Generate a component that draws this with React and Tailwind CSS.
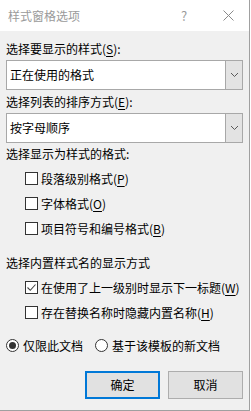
import React, { useState } from 'react';

const font = { fontFamily: '"Microsoft YaHei UI", "Noto Sans CJK SC", "Liberation Sans", sans-serif' };

// access-key letter, underlined like a Windows dialog
const Key = ({ children }) => <span className="underline underline-offset-[2px]">{children}</span>;

const Chevron = () => (
  <svg width="9" height="6" viewBox="0 0 9 6" fill="none">
    <path d="M1 1l3.5 3.5L8 1" stroke="#5a5a5a" strokeWidth="1" />
  </svg>
);

const Select = ({ value }) => (
  <div className="flex h-[30px] border border-[#a8a8a8] bg-white">
    <div className="flex-1 flex items-center pl-[3px] text-[12px] text-black">{value}</div>
    <div className="w-[17px] flex items-center justify-center bg-[#e3e3e3] border-l border-[#a8a8a8]">
      <Chevron />
    </div>
  </div>
);

const Checkbox = ({ checked, label, indent = true }) => (
  <div className={`flex items-center h-[25px] ${indent ? 'pl-[19px]' : ''}`}>
    <div className="w-[13px] h-[13px] border border-[#333] bg-white flex items-center justify-center">
      {checked && (
        <svg width="11" height="11" viewBox="0 0 11 11" fill="none">
          <path d="M1.5 5.5l2.8 2.8L9.5 2.5" stroke="#444" strokeWidth="1.1" />
        </svg>
      )}
    </div>
    <span className="ml-[3px] text-[12px] text-black leading-[16px]">{label}</span>
  </div>
);

const Radio = ({ checked, label, onClick }) => (
  <div className="flex items-center cursor-default" onClick={onClick}>
    <div className="w-[13px] h-[13px] rounded-full border border-[#333] bg-white flex items-center justify-center">
      {checked && <div className="w-[7px] h-[7px] rounded-full bg-[#333]" />}
    </div>
    <span className="ml-[4px] text-[12px] text-black leading-[16px]">{label}</span>
  </div>
);

export default function App() {
  const [scope, setScope] = useState('doc');

  return (
    <div className="w-[251px] h-[411px] bg-white flex" style={font}>
      <div className="w-[250px] h-[411px] flex flex-col border-r border-b border-[#a0a0a0]">
        {/* Title bar */}
        <div className="h-[31px] bg-white flex items-center pl-[8px] text-[12px] text-[#9a9a9a]">
          <span className="flex-1">样式窗格选项</span>
          <span className="w-[14px] text-center text-[13px] mr-[32px]">?</span>
          <svg className="mr-[15px]" width="11" height="11" viewBox="0 0 11 11" fill="none">
            <path d="M0.5 0.5l10 10M10.5 0.5l-10 10" stroke="#8a8a8a" strokeWidth="1" />
          </svg>
        </div>

        {/* Body */}
        <div className="flex-1 bg-[#f0f0f0] px-[6px] pt-[10px] text-[12px] leading-[16px] text-black">
          <div>选择要显示的样式(<Key>S</Key>):</div>
          <div className="mt-[3px]">
            <Select value="正在使用的格式" />
          </div>

          <div className="mt-[4px]">选择列表的排序方式(<Key>E</Key>):</div>
          <div className="mt-[3px]">
            <Select value="按字母顺序" />
          </div>

          <div className="mt-[3px]">选择显示为样式的格式:</div>
          <div className="mt-[4px]">
            <Checkbox label={<>段落级别格式(<Key>P</Key>)</>} />
            <Checkbox label={<>字体格式(<Key>O</Key>)</>} />
            <Checkbox label={<>项目符号和编号格式(<Key>B</Key>)</>} />
          </div>

          <div className="mt-[14px]">选择内置样式名的显示方式</div>
          <div className="mt-[4px]">
            <Checkbox checked label={<>在使用了上一级别时显示下一标题(<Key>W</Key>)</>} />
            <Checkbox label={<>存在替换名称时隐藏内置名称(<Key>H</Key>)</>} />
          </div>

          <div className="mt-[8px] h-[25px] flex items-center gap-[12px]">
            <Radio checked={scope === 'doc'} label="仅限此文档" onClick={() => setScope('doc')} />
            <Radio checked={scope === 'tpl'} label="基于该模板的新文档" onClick={() => setScope('tpl')} />
          </div>

          <div className="mt-[13px] flex justify-end gap-[8px]">
            <button className="w-[75px] h-[28px] bg-[#e1e1e1] border-2 border-[#0078d7] text-[12px] text-black">
              确定
            </button>
            <button className="w-[75px] h-[28px] bg-[#e1e1e1] border border-[#adadad] text-[12px] text-black">
              取消
            </button>
          </div>
        </div>
      </div>
    </div>
  );
}
